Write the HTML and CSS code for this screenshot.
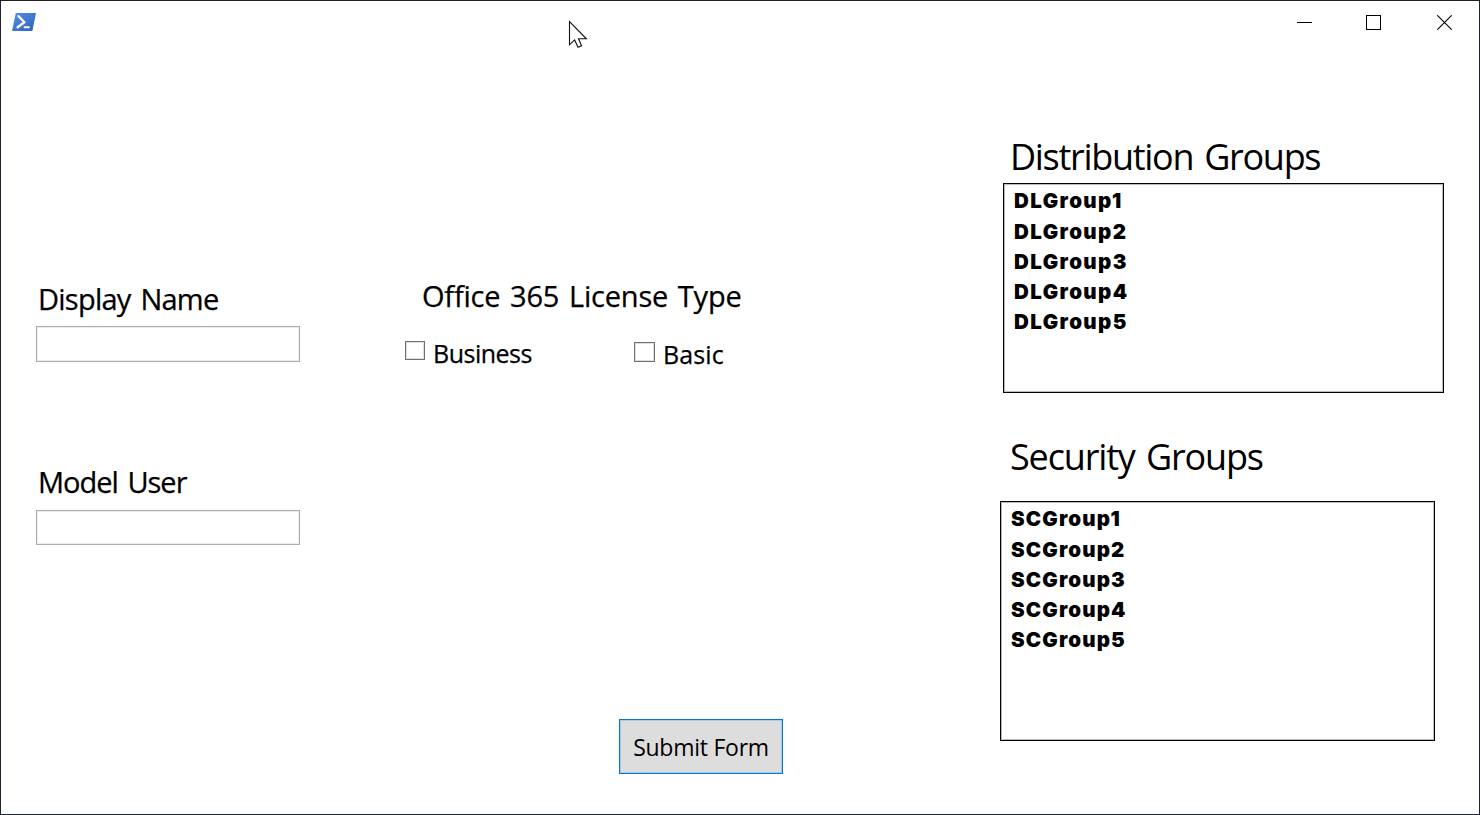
FILE: index.html
```html
<!DOCTYPE html>
<html lang="en">
<head>
<meta charset="utf-8">
<title>New User Form</title>
<link rel="stylesheet" href="styles.css">
</head>
<body>
<div class="window">
  <header class="titlebar">
    <svg class="app-icon" width="26" height="20" viewBox="0 0 26 20">
      <defs><linearGradient id="blue" x1="0" y1="0" x2="1" y2="1"><stop offset="0" stop-color="#5391e5"/><stop offset="1" stop-color="#2f61bd"/></linearGradient></defs>
      <path d="M4.8 1h20.2L21.4 19H1z" fill="url(#blue)"/>
      <path d="M7.6 4.2l5.8 6.1L6.6 15.3" fill="none" stroke="#fff" stroke-width="2.3" stroke-linecap="round" stroke-linejoin="round"/>
      <path d="M13.6 15.2h4.2" stroke="#fff" stroke-width="2" stroke-linecap="round"/>
    </svg>
    <div class="controls">
      <svg width="15" height="15" viewBox="0 0 15 15" shape-rendering="crispEdges"><path d="M0 7.5h15" stroke="#000"/></svg>
      <svg width="15" height="15" viewBox="0 0 15 15" shape-rendering="crispEdges"><path d="M.5.5h14v14H.5z" fill="none" stroke="#000"/></svg>
      <svg width="15" height="15" viewBox="0 0 15 15"><path d="M.3.3l14.4 14.4M14.7.3L.3 14.7" stroke="#000" stroke-width="1.1"/></svg>
    </div>
  </header>
  <main class="form">
    <section class="fields">
      <label class="label display-label" for="display">Display Name</label>
      <input class="input display-input" id="display" type="text">
      <label class="label model-label" for="model">Model User</label>
      <input class="input model-input" id="model" type="text">
    </section>
    <section class="license">
      <h2 class="label license-title">Office 365 License Type</h2>
      <div class="options">
        <label class="option business"><input class="check" type="checkbox"><span>Business</span></label>
        <label class="option basic"><input class="check" type="checkbox"><span>Basic</span></label>
      </div>
      <button class="submit" type="button">Submit Form</button>
    </section>
    <section class="groups">
      <h1 class="heading dist-title">Distribution Groups</h1>
      <ul class="list dist-list">
        <li>DLGroup1</li><li>DLGroup2</li><li>DLGroup3</li><li>DLGroup4</li><li>DLGroup5</li>
      </ul>
      <h1 class="heading sec-title">Security Groups</h1>
      <ul class="list sec-list">
        <li>SCGroup1</li><li>SCGroup2</li><li>SCGroup3</li><li>SCGroup4</li><li>SCGroup5</li>
      </ul>
    </section>
  </main>
  <svg class="cursor" width="20" height="29" viewBox="0 0 20 29"><path d="M1.5 1.6v23.2l5.1-4.9 3.4 7.4 3.6-1.6-3.1-6.9h7.9z" fill="#fff" stroke="#101018" stroke-width="1.1"/></svg>
</div>
</body>
</html>
```
FILE: styles.css
```css
* { box-sizing: border-box; }
body { margin: 0; background: #fff; color: #000; font-family: "Trebuchet MS", "Open Sans", "Noto Sans", sans-serif; }
h1, h2, ul { margin: 0; padding: 0; font-weight: 400; }
.window { position: relative; width: 1480px; height: 815px; border: 1px solid #1c2333; border-top-color: #231f20; background: #fff; overflow: hidden; }
.titlebar { display: flex; justify-content: space-between; height: 43px; padding: 11px 27px 0 10px; }
.controls { display: flex; gap: 55px; padding-top: 3px; }
.controls svg:nth-child(1) { margin-right: -1px; }
.controls svg:nth-child(2) { margin-right: 1px; }
.app-icon, .controls svg { display: block; }
.cursor { position: absolute; left: 567px; top: 19px; }
.form { display: flex; height: 770px; padding-left: 35px; }
.fields { display: flex; flex-direction: column; width: 369px; padding-top: 237px; }
.label { font-size: 29px; line-height: 36px; white-space: nowrap; -webkit-text-stroke: 0.25px #000; }
.display-label, .model-label { padding-left: 2px; letter-spacing: -0.75px; word-spacing: 3px; }
.model-label { letter-spacing: -1px; }
.input { width: 264px; height: 36px; padding: 0 6px; border: 1px solid #abadb3; border-radius: 0; box-shadow: inset 0 0 0 1px #ececee; font: inherit; font-size: 22px; outline: 0; }
.display-input { margin-top: 9px; }
.model-label { margin-top: 102px; }
.model-input { height: 35px; margin-top: 10px; }
.license { display: flex; flex-direction: column; width: 595px; padding-top: 234px; }
.license-title { padding-left: 17px; letter-spacing: -0.2px; word-spacing: 2.4px; }
.options { display: flex; align-items: flex-start; margin-top: 22px; }
.option { display: flex; align-items: flex-start; gap: 8px; font-size: 25px; line-height: 30px; -webkit-text-stroke: 0.25px #000; }
.option span { margin-top: 2px; margin-bottom: -2px; }
.business { width: 229px; letter-spacing: -0.5px; }
.check { appearance: none; flex: none; width: 20px; height: 19px; margin: 5px 0 0; border: 1px solid #707070; box-shadow: inset 0 0 0 1px #dedede; background: #fff; }
.basic { padding-top: 1px; letter-spacing: 0.1px; }
.basic .check { width: 21px; height: 20px; }
.submit { width: 164px; height: 55px; margin: 352px 0 0 214px; padding: 0; border: 1px solid #0078d7; box-shadow: inset 0 0 0 1px #a9c9e3; background: #ddd; color: #000; font-family: "Segoe UI", "Open Sans", sans-serif; font-size: 23px; line-height: 30px; letter-spacing: -0.25px; white-space: nowrap; }
.groups { display: flex; flex-direction: column; width: 444px; padding-top: 91px; }
.heading { padding-left: 10px; font-size: 36px; line-height: 44px; letter-spacing: -1.3px; word-spacing: 3px; white-space: nowrap; }
.list { list-style: none; border: 1px solid #000; box-shadow: inset 0 0 0 1px #bbb; font-family: "Arial Black", Inter, sans-serif; font-weight: 900; font-size: 20.5px; line-height: 30.2px; letter-spacing: 1.4px; }
.dist-list { width: 441px; height: 210px; margin: 4px 0 0 3px; padding: 2.4px 0 0 10px; }
.sec-title { margin-top: 42px; letter-spacing: -1.15px; }
.sec-list { width: 435px; height: 240px; margin-top: 22px; padding: 2.4px 0 0 10px; letter-spacing: 1.15px; }
```
